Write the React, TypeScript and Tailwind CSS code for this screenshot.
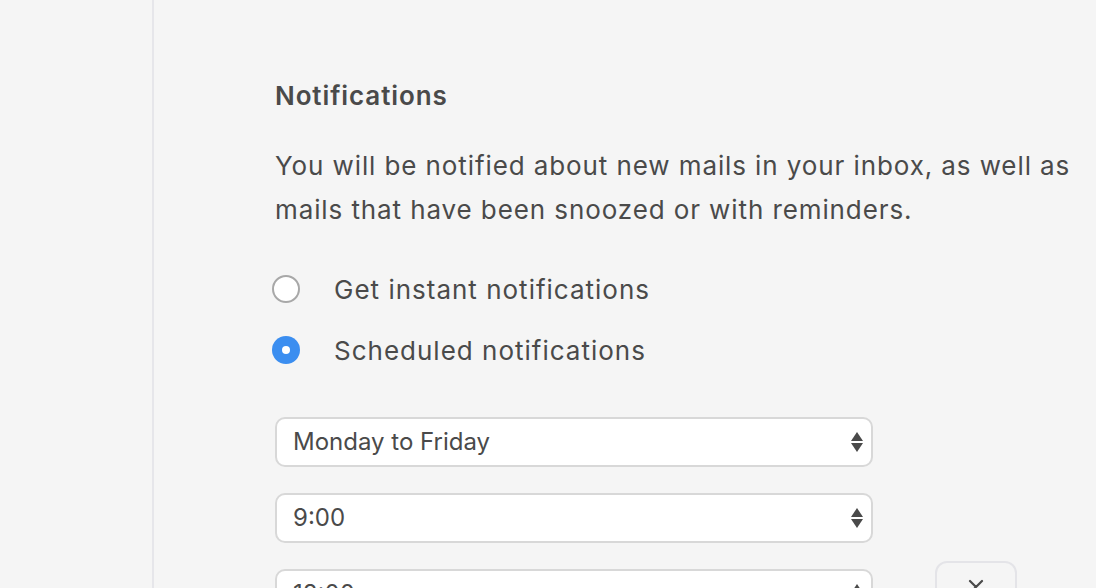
import React from "react";

function Arrows() {
  return (
    <svg width="14" height="22" viewBox="0 0 14 22" className="shrink-0">
      <path d="M7 1 L13 10 L1 10 Z" fill="#4a4a4a" />
      <path d="M1 12 L13 12 L7 21 Z" fill="#4a4a4a" />
    </svg>
  );
}

function Select({ value }: { value: string }) {
  return (
    <div className="flex h-[50px] w-[598px] shrink-0 items-center justify-between rounded-[10px] border-2 border-[#d8d8d8] bg-white pl-4 pr-[7px]">
      <span className="text-[24px] tracking-[0px] text-[#4a4a4a]">{value}</span>
      <Arrows />
    </div>
  );
}

function Radio({ checked, label }: { checked?: boolean; label: string }) {
  return (
    <div className="flex h-[44px] items-center gap-[34px]">
      {checked ? (
        <div className="ml-[-3px] flex h-[28px] w-[28px] items-center justify-center rounded-full bg-[#3b8ef0]">
          <div className="h-[8px] w-[8px] rounded-full bg-white" />
        </div>
      ) : (
        <div className="ml-[-3px] h-[28px] w-[28px] rounded-full border-2 border-[#a8a8a8] bg-white" />
      )}
      <span className="text-[26px] tracking-[1px] text-[#4a4a4a]">{label}</span>
    </div>
  );
}

export default function App() {
  return (
    <div
      className="flex h-[588px] w-[1096px] overflow-hidden bg-[#f5f5f5]"
      style={{ fontFamily: "Inter, 'Noto Sans', sans-serif" }}
    >
      <div className="h-full w-[154px] shrink-0 border-r-2 border-[#e6e6ea]" />
      <div className="flex flex-col pl-[121px] pt-[78px]">
        <h1 className="text-[26px] font-semibold leading-[36px] tracking-[0.9px] text-[#4a4a4a]">Notifications</h1>
        <p className="mt-[30px] w-[820px] text-[26px] leading-[44px] tracking-[0.9px] text-[#4a4a4a]">
          You will be notified about new mails in your inbox, as well as mails that have been snoozed or with reminders.
        </p>
        <div className="mt-[35px] flex flex-col gap-[17px]">
          <Radio label="Get instant notifications" />
          <Radio checked label="Scheduled notifications" />
        </div>
        <div className="mt-[45px] flex flex-col gap-[26px]">
          <Select value="Monday to Friday" />
          <Select value="9:00" />
          <div className="flex items-start gap-[62px]">
            <Select value="18:00" />
            <div className="mt-[-8px] flex h-[60px] w-[82px] shrink-0 items-start justify-center rounded-[12px] border-2 border-[#e4e4e8] pt-[14px]">
              <svg width="20" height="20" viewBox="0 0 20 20">
                <path d="M4 4 L16 16 M16 4 L4 16" stroke="#4a4a4a" strokeWidth="2.2" strokeLinecap="round" />
              </svg>
            </div>
          </div>
        </div>
      </div>
    </div>
  );
}
